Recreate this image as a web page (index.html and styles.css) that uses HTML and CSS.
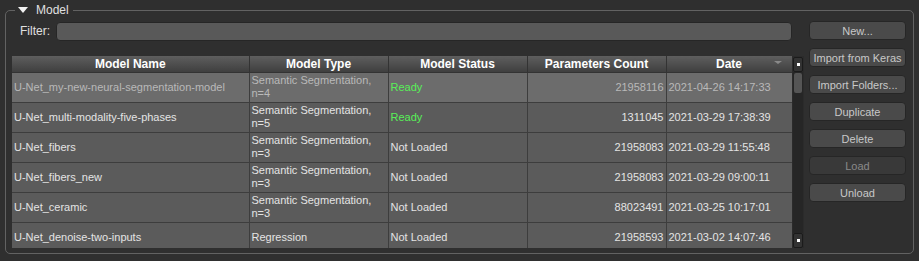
FILE: index.html
```html
<!DOCTYPE html>
<html lang="en">
<head>
    <meta charset="UTF-8">
    <title>Model</title>
    <link rel="stylesheet" href="styles.css">
</head>
<body>
    <div class="group">
        <div class="group-title"><span class="arrow"></span>Model</div>
        <div class="group-body">
            <div class="main">
                <div class="filter">
                    <label for="filter">Filter:</label>
                    <input type="text" id="filter">
                </div>
                <div class="grid">
                    <div class="table-wrap">
                        <table>
                            <colgroup>
                                <col style="width: 237px">
                                <col style="width: 139px">
                                <col style="width: 139px">
                                <col style="width: 139px">
                                <col style="width: 126px">
                            </colgroup>
                            <thead>
                                <tr>
                                    <th>Model Name</th>
                                    <th>Model Type</th>
                                    <th>Model Status</th>
                                    <th>Parameters Count</th>
                                    <th class="sorted">Date</th>
                                </tr>
                            </thead>
                            <tbody>
                                <tr class="selected">
                                    <td>U-Net_my-new-neural-segmentation-model</td>
                                    <td>Semantic Segmentation,<br>n=4</td>
                                    <td class="ready">Ready</td>
                                    <td class="num">21958116</td>
                                    <td>2021-04-26 14:17:33</td>
                                </tr>
                                <tr>
                                    <td>U-Net_multi-modality-five-phases</td>
                                    <td>Semantic Segmentation,<br>n=5</td>
                                    <td class="ready">Ready</td>
                                    <td class="num">1311045</td>
                                    <td>2021-03-29 17:38:39</td>
                                </tr>
                                <tr>
                                    <td>U-Net_fibers</td>
                                    <td>Semantic Segmentation,<br>n=3</td>
                                    <td>Not Loaded</td>
                                    <td class="num">21958083</td>
                                    <td>2021-03-29 11:55:48</td>
                                </tr>
                                <tr>
                                    <td>U-Net_fibers_new</td>
                                    <td>Semantic Segmentation,<br>n=3</td>
                                    <td>Not Loaded</td>
                                    <td class="num">21958083</td>
                                    <td>2021-03-29 09:00:11</td>
                                </tr>
                                <tr>
                                    <td>U-Net_ceramic</td>
                                    <td>Semantic Segmentation,<br>n=3</td>
                                    <td>Not Loaded</td>
                                    <td class="num">88023491</td>
                                    <td>2021-03-25 10:17:01</td>
                                </tr>
                                <tr>
                                    <td>U-Net_denoise-two-inputs</td>
                                    <td>Regression</td>
                                    <td>Not Loaded</td>
                                    <td class="num">21958593</td>
                                    <td>2021-03-02 14:07:46</td>
                                </tr>
                            </tbody>
                        </table>
                    </div>
                    <div class="scrollbar">
                        <div class="sb-btn"><span></span></div>
                        <div class="sb-track"><div class="sb-thumb"></div></div>
                        <div class="sb-btn"><span></span></div>
                    </div>
                </div>
            </div>
            <div class="buttons">
                <button>New...</button>
                <button>Import from Keras</button>
                <button>Import Folders...</button>
                <button>Duplicate</button>
                <button>Delete</button>
                <button disabled>Load</button>
                <button>Unload</button>
            </div>
        </div>
    </div>
</body>
</html>
```

FILE: styles.css
```css
* {
    box-sizing: border-box;
}

body {
    margin: 0;
    background: #2f2f2f;
    font-family: 'Liberation Sans', Arial, sans-serif;
    font-size: 12px;
    color: #e2e2e2;
}

.group {
    position: relative;
    margin: 10px 5px 0 5px;
    height: 244px;
    border: 1px solid #626262;
    border-radius: 5px;
}

.group-title {
    position: absolute;
    top: -8px;
    left: 9px;
    padding: 0 4px 0 3px;
    background: #2f2f2f;
    color: #e0e0e0;
    line-height: 14px;
    display: flex;
    align-items: center;
}

.arrow {
    width: 0;
    height: 0;
    border-left: 5px solid transparent;
    border-right: 5px solid transparent;
    border-top: 6px solid #f2f2f2;
    margin-right: 8px;
}

.group-body {
    display: flex;
    gap: 5px;
    padding: 10px 6px 0 6px;
}

.main {
    width: 792px;
}

.filter {
    display: flex;
    align-items: center;
    padding-left: 8px;
    height: 20px;
}

.filter label {
    width: 36px;
    color: #e0e0e0;
}

.filter input {
    width: 736px;
    height: 19px;
    border: 1px solid #262626;
    border-radius: 4px;
    background: #595959;
}

.grid {
    display: flex;
    margin-top: 15px;
    height: 192px;
}

.table-wrap {
    width: 780px;
    height: 192px;
    overflow: hidden;
    background: #5b5b5b;
}

table {
    border-collapse: collapse;
    table-layout: fixed;
    width: 780px;
}

th {
    height: 16px;
    padding: 0 4px;
    font-weight: bold;
    color: #ffffff;
    text-align: center;
    background: linear-gradient(#5e5e5e, #3f3f3f);
    border: 1px solid #333333;
    border-top: none;
    line-height: 14px;
    white-space: nowrap;
}

th.sorted {
    position: relative;
}

th.sorted::after {
    content: '';
    position: absolute;
    right: 10px;
    top: 5px;
    border-left: 4px solid transparent;
    border-right: 4px solid transparent;
    border-top: 3px solid #8a8a8a;
}

td {
    height: 30px;
    padding: 0 2px;
    border: 1px solid #3d3d3d;
    font-size: 11px;
    line-height: 13px;
    white-space: nowrap;
    overflow: hidden;
    color: #e4e4e4;
}

tr td:first-child,
tr th:first-child {
    border-left: none;
}

tr.selected td {
    background: #6c6c6c;
    color: #b9b9b9;
}

td.ready,
tr.selected td.ready {
    color: #58f058;
}

td.num {
    text-align: right;
}

.scrollbar {
    width: 12px;
    display: flex;
    flex-direction: column;
    background: #2b2b2b;
    padding: 1px 1px 0 1px;
}

.sb-btn {
    height: 15px;
    border: 1px solid #1b1b1b;
    border-radius: 2px;
    background: #333333;
    display: flex;
    align-items: center;
    justify-content: center;
}

.sb-btn span {
    width: 3px;
    height: 3px;
    background: #ffffff;
}

.sb-track {
    flex: 1;
    background: #262626;
    padding: 1px 0 0 1px;
}

.sb-thumb {
    width: 8px;
    height: 20px;
    background: #555555;
    border-radius: 2px;
}

.buttons {
    display: flex;
    flex-direction: column;
    gap: 8px;
}

button {
    width: 97px;
    height: 19px;
    padding: 0;
    font-family: 'Liberation Sans', Arial, sans-serif;
    font-size: 11px;
    white-space: nowrap;
    color: #c8c8c8;
    background: #4a4a4a;
    border: 1px solid #262626;
    border-radius: 4px;
}

button:disabled {
    background: #393939;
    color: #8a8a8a;
}
```
